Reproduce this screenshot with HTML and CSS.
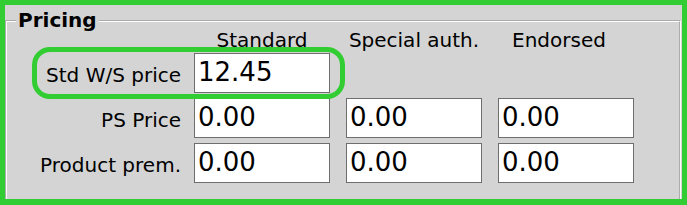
FILE: index.html
```html
<!DOCTYPE html>
<html>
<head>
<meta charset="utf-8">
<link rel="stylesheet" href="styles.css">
</head>
<body>
<div class="frame">
  <fieldset class="group">
    <legend class="group-title">Pricing</legend>
    <div class="grid">
      <div class="corner"></div>
      <div class="col-head">Standard</div>
      <div class="col-head">Special auth.</div>
      <div class="col-head col-head-last">Endorsed</div>

      <div class="row-label">Std W/S price</div>
      <input class="field" type="text" value="12.45">
      <div class="empty"></div>
      <div class="empty"></div>

      <div class="row-label">PS Price</div>
      <input class="field" type="text" value="0.00">
      <input class="field" type="text" value="0.00">
      <input class="field" type="text" value="0.00">

      <div class="row-label">Product prem.</div>
      <input class="field" type="text" value="0.00">
      <input class="field" type="text" value="0.00">
      <input class="field" type="text" value="0.00">
    </div>
  </fieldset>
  <div class="highlight"></div>
</div>
</body>
</html>
```

FILE: styles.css
```css
html, body {
  margin: 0;
  padding: 0;
  background: #d4d4d4;
}

body {
  width: 687px;
  height: 205px;
  overflow: hidden;
  font-family: "DejaVu Sans", Verdana, sans-serif;
  color: #000;
}

.frame {
  position: relative;
  box-sizing: border-box;
  width: 687px;
  height: 205px;
  border-style: solid;
  border-color: #32cd32;
  border-width: 5px 5px 6px 5px;
  overflow: hidden;
}

.group {
  box-sizing: border-box;
  margin: 4px 1px 0 0;
  padding: 0;
  height: 200px;
  border: 2px groove #ffffff;
  min-width: 0;
}

.group-title {
  margin-left: 9px;
  padding: 0 2px;
  font-size: 20px;
  line-height: 23px;
  font-weight: bold;
}

.grid {
  display: grid;
  grid-template-columns: 173px 136px 136px 136px;
  grid-template-rows: 21px 40px 40px 40px;
  column-gap: 16px;
  row-gap: 5px;
  margin-left: -2px;
  margin-top: -5px;
}

.grid > .row-label,
.grid > .corner {
  margin-right: -3px;
}

.col-head {
  font-size: 20px;
  line-height: 21px;
  padding-top: 3px;
  text-align: center;
  white-space: nowrap;
  overflow: visible;
  height: 21px;
  box-sizing: border-box;
}

.col-head-last {
  padding-right: 14px;
}

.row-label {
  font-size: 20px;
  line-height: 23px;
  padding-top: 11px;
  text-align: right;
  white-space: nowrap;
}

.field {
  box-sizing: border-box;
  width: 136px;
  height: 40px;
  margin: 0;
  padding: 0 3px 2px 3px;
  border: 1px solid #6e6e6e;
  background: #fff;
  font-family: "DejaVu Sans", Verdana, sans-serif;
  font-size: 26px;
  color: #000;
  outline: none;
}

.highlight {
  position: absolute;
  left: 27px;
  top: 42px;
  width: 313px;
  height: 52px;
  box-sizing: border-box;
  border: 5px solid #32cd32;
  border-radius: 18px;
  pointer-events: none;
}
```
